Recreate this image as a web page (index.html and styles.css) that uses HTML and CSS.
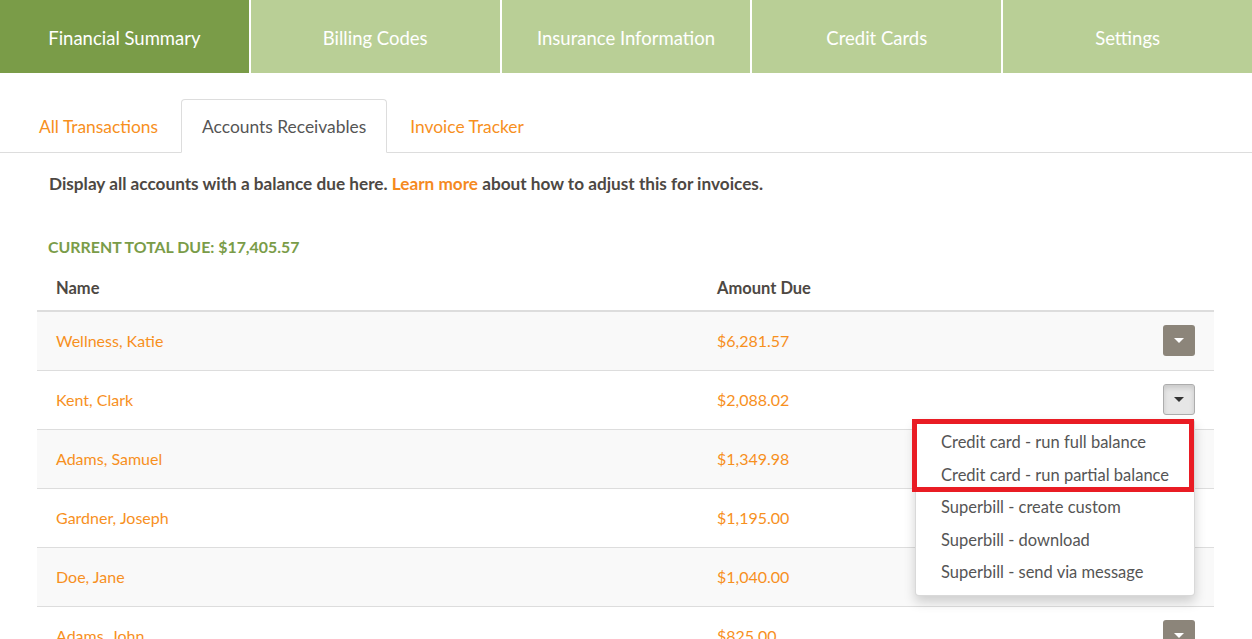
FILE: index.html
```
<!DOCTYPE html>
<html lang="en">
<head>
  <meta charset="utf-8">
  <meta name="viewport" content="width=device-width, initial-scale=1">
  <title>Financial Summary</title>
  <link rel="stylesheet" href="styles.css">
</head>
<body>
  <nav class="main-nav">
    <a class="main-nav-item active" href="#">Financial Summary</a>
    <a class="main-nav-item" href="#">Billing Codes</a>
    <a class="main-nav-item" href="#">Insurance Information</a>
    <a class="main-nav-item" href="#">Credit Cards</a>
    <a class="main-nav-item" href="#">Settings</a>
  </nav>

  <ul class="sub-tabs">
    <li><a href="#">All Transactions</a></li>
    <li class="active"><a href="#">Accounts Receivables</a></li>
    <li><a href="#">Invoice Tracker</a></li>
  </ul>

  <main class="content">
    <p class="intro">Display all accounts with a balance due here. <a href="#">Learn more</a> about how to adjust this for invoices.</p>

    <h4 class="total-due">CURRENT TOTAL DUE: $17,405.57</h4>

    <table class="ar-table">
      <thead>
        <tr>
          <th class="col-name">Name</th>
          <th>Amount Due</th>
          <th></th>
        </tr>
      </thead>
      <tbody>
        <tr>
          <td><a href="#">Wellness, Katie</a></td>
          <td class="amount">$6,281.57</td>
          <td class="actions"><button class="caret-btn"><span class="caret"></span></button></td>
        </tr>
        <tr>
          <td><a href="#">Kent, Clark</a></td>
          <td class="amount">$2,088.02</td>
          <td class="actions">
            <div class="btn-group open">
              <button class="caret-btn"><span class="caret"></span></button>
              <ul class="dropdown-menu">
                <li><a href="#">Credit card - run full balance</a></li>
                <li><a href="#">Credit card - run partial balance</a></li>
                <li><a href="#">Superbill - create custom</a></li>
                <li><a href="#">Superbill - download</a></li>
                <li><a href="#">Superbill - send via message</a></li>
                <li class="highlight-box"></li>
              </ul>
            </div>
          </td>
        </tr>
        <tr>
          <td><a href="#">Adams, Samuel</a></td>
          <td class="amount">$1,349.98</td>
          <td class="actions"><button class="caret-btn"><span class="caret"></span></button></td>
        </tr>
        <tr>
          <td><a href="#">Gardner, Joseph</a></td>
          <td class="amount">$1,195.00</td>
          <td class="actions"><button class="caret-btn"><span class="caret"></span></button></td>
        </tr>
        <tr>
          <td><a href="#">Doe, Jane</a></td>
          <td class="amount">$1,040.00</td>
          <td class="actions"><button class="caret-btn"><span class="caret"></span></button></td>
        </tr>
        <tr>
          <td><a href="#">Adams, John</a></td>
          <td class="amount">$825.00</td>
          <td class="actions"><button class="caret-btn"><span class="caret"></span></button></td>
        </tr>
      </tbody>
    </table>
  </main>
</body>
</html>
```

FILE: styles.css
```
:root {
  --green-dark: #7a9c48;
  --green-light: #b9cf96;
  --orange: #f7901e;
  --text-color: #4d4843;
  --border-color: #dddddd;
  --stripe: #f9f9f9;
  --taupe: #8c857a;
}

* {
  margin: 0;
  padding: 0;
  box-sizing: border-box;
}

body {
  font-family: 'Lato', 'Liberation Sans', sans-serif;
  font-size: 16px;
  color: var(--text-color);
  background: #fff;
  overflow: hidden;
}

a {
  text-decoration: none;
  color: var(--orange);
}

/* Top navigation */
.main-nav {
  display: flex;
  height: 73px;
}

.main-nav-item {
  flex: 1;
  display: flex;
  align-items: center;
  justify-content: center;
  padding-top: 3px;
  background: var(--green-light);
  color: #fff;
  font-size: 18.5px;
  border-left: 2px solid #fff;
}

.main-nav-item:first-child {
  border-left: none;
}

.main-nav-item.active {
  background: var(--green-dark);
}

/* Sub tabs */
.sub-tabs {
  list-style: none;
  display: flex;
  margin-top: 26px;
  padding-left: 18px;
  border-bottom: 1px solid var(--border-color);
}

.sub-tabs li {
  margin-right: 2px;
  margin-bottom: -1px;
}

.sub-tabs a {
  display: block;
  padding: 2px 20px 0;
  line-height: 50px;
  font-size: 17.4px;
  border: 1px solid transparent;
  border-radius: 4px 4px 0 0;
}

.sub-tabs li.active a {
  color: #555;
  border-color: var(--border-color);
  border-bottom-color: #fff;
  background: #fff;
}

/* Content */
.content {
  padding: 0 38px 0 37px;
}

.intro {
  font-weight: 700;
  font-size: 17.2px;
  padding: 21px 0 0 12px;
  line-height: 20px;
}

.intro a {
  color: #f58a1f;
}

.total-due {
  color: var(--green-dark);
  font-size: 15.9px;
  font-weight: 700;
  padding: 43px 0 0 11px;
  line-height: 20px;
}

/* Table */
.ar-table {
  width: 100%;
  border-collapse: collapse;
  margin-top: 12px;
}

.ar-table th {
  text-align: left;
  font-weight: 700;
  font-size: 16.5px;
  padding: 0 19px 3px;
  height: 42px;
  vertical-align: middle;
  border-bottom: 2px solid var(--border-color);
}

.ar-table .col-name {
  width: 661px;
}

.ar-table td {
  height: 59px;
  padding: 0 19px;
  vertical-align: middle;
  border-top: 1px solid var(--border-color);
  font-size: 16px;
}

.ar-table tbody tr:first-child td {
  border-top: none;
}

.ar-table tbody tr:nth-child(odd) td {
  background: var(--stripe);
}

.ar-table .amount {
  color: var(--orange);
}

.ar-table .actions {
  text-align: right;
  width: 80px;
}

.caret-btn {
  width: 32px;
  height: 31px;
  border: none;
  border-radius: 3px;
  background: var(--taupe);
  display: inline-flex;
  align-items: center;
  justify-content: center;
  cursor: pointer;
  vertical-align: middle;
}

.caret {
  width: 0;
  height: 0;
  border-left: 5px solid transparent;
  border-right: 5px solid transparent;
  border-top: 5px solid #fff;
}

/* Open dropdown */
.btn-group {
  position: relative;
  display: inline-block;
  vertical-align: middle;
}

.btn-group.open .caret-btn {
  background: #e6e6e6;
  border: 1px solid #adadad;
  box-shadow: inset 0 3px 5px rgba(0, 0, 0, 0.125);
}

.btn-group.open .caret {
  border-top-color: #333;
}

.dropdown-menu {
  position: absolute;
  top: calc(100% + 4px);
  right: 0;
  width: 280px;
  list-style: none;
  background: #fff;
  border: 1px solid rgba(0, 0, 0, 0.15);
  border-radius: 4px;
  box-shadow: 0 6px 12px rgba(0, 0, 0, 0.175);
  padding: 6px 0;
  text-align: left;
  z-index: 10;
}

.dropdown-menu a {
  display: block;
  padding: 0 25px;
  line-height: 32.5px;
  color: #555;
  font-size: 16.5px;
  white-space: nowrap;
}

/* annotation box round the credit card items */
.highlight-box {
  position: absolute;
  top: -1px;
  left: -4px;
  width: 282px;
  height: 73px;
  border: 5px solid #e91c24;
  pointer-events: none;
}
```
